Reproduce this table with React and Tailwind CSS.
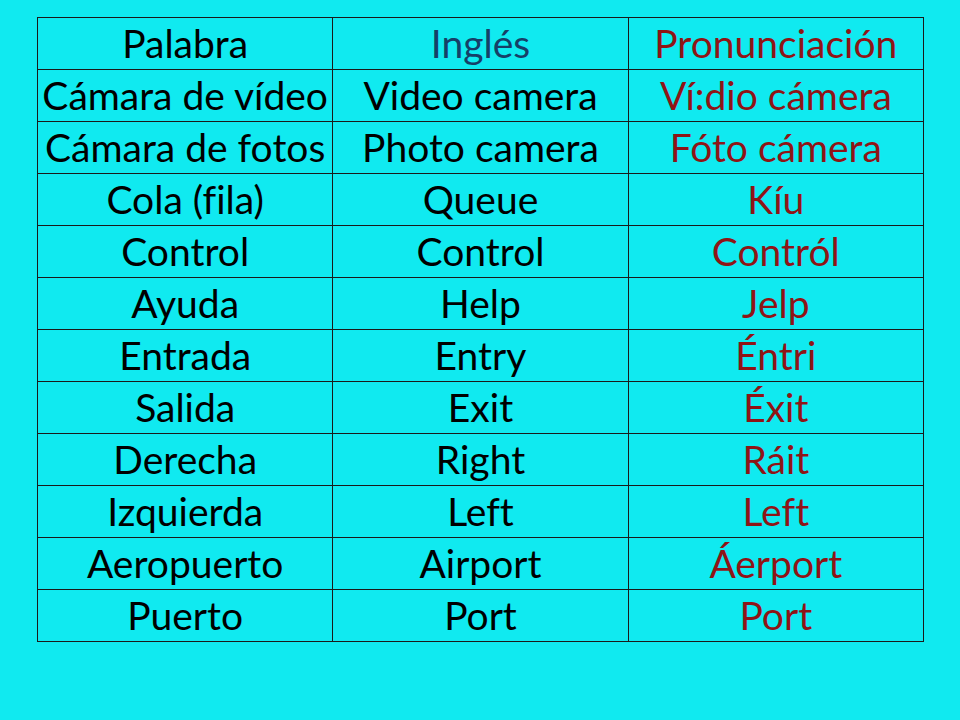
const rows = [
  ['Cámara de vídeo', 'Video camera', 'Ví:dio cámera'],
  ['Cámara de fotos', 'Photo camera', 'Fóto cámera'],
  ['Cola (fila)', 'Queue', 'Kíu'],
  ['Control', 'Control', 'Contról'],
  ['Ayuda', 'Help', 'Jelp'],
  ['Entrada', 'Entry', 'Éntri'],
  ['Salida', 'Exit', 'Éxit'],
  ['Derecha', 'Right', 'Ráit'],
  ['Izquierda', 'Left', 'Left'],
  ['Aeropuerto', 'Airport', 'Áerport'],
  ['Puerto', 'Port', 'Port'],
];

export default function App() {
  return (
    <div className="w-[960px] h-[720px] bg-[#10eaf0] pt-[17px] pl-[37px]" style={{ fontFamily: 'Lato, "Open Sans", sans-serif' }}>
      <table className="border-collapse w-[887px] table-fixed text-[39px] leading-none [font-variant-ligatures:none]">
        <thead>
          <tr className="h-[52px]">
            <th className="border border-[#1a1a1a] font-normal text-[#000] whitespace-nowrap">Palabra</th>
            <th className="border border-[#1a1a1a] font-normal text-[#163f68] whitespace-nowrap">Inglés</th>
            <th className="border border-[#1a1a1a] font-normal text-[#8f1416] whitespace-nowrap">Pronunciación</th>
          </tr>
        </thead>
        <tbody>
          {rows.map((r) => (
            <tr key={r[0]} className="h-[52px]">
              <td className="border border-[#1a1a1a] text-center text-[#000] whitespace-nowrap">{r[0]}</td>
              <td className="border border-[#1a1a1a] text-center text-[#000] whitespace-nowrap">{r[1]}</td>
              <td className="border border-[#1a1a1a] text-center text-[#8f1416] whitespace-nowrap">{r[2]}</td>
            </tr>
          ))}
        </tbody>
      </table>
    </div>
  );
}
